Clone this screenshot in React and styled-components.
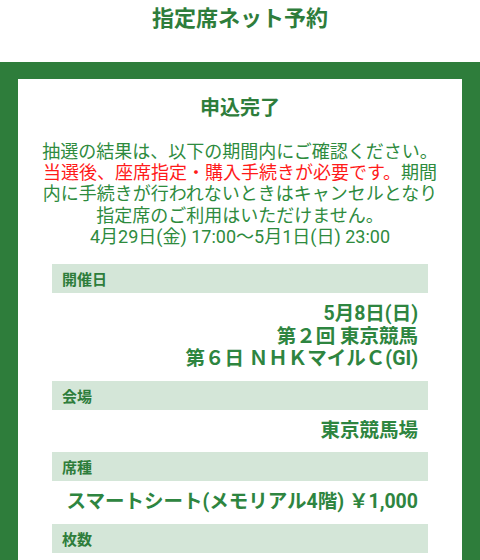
import styled, { createGlobalStyle } from 'styled-components'

const GlobalStyle = createGlobalStyle`
  html, body {
    margin: 0;
    padding: 0;
    background: #ffffff;
    font-family: Roboto, "Noto Sans CJK JP", sans-serif;
  }
`

const rows = [
  { label: '開催日', lines: ['5月8日(日)', '第２回 東京競馬', '第６日 ＮＨＫマイルＣ(GI)'] },
  { label: '会場', lines: ['東京競馬場'] },
  { label: '席種', lines: ['スマートシート(メモリアル4階) ￥1,000'] },
  { label: '枚数', lines: ['1枚'] },
]

const App = () => {
  return (
    <>
      <GlobalStyle />
      <Header>
        <PageTitle>指定席ネット予約</PageTitle>
      </Header>
      <Frame>
        <Card>
          <CardTitle>申込完了</CardTitle>
          <Notice>
            抽選の結果は、以下の期間内にご確認ください。
            <br />
            <Alert>当選後、座席指定・購入手続きが必要です。</Alert>期間
            <br />
            内に手続きが行われないときはキャンセルとなり
            <br />
            指定席のご利用はいただけません。
            <br />
            4月29日(金) 17:00〜5月1日(日) 23:00
          </Notice>
          <Details>
            {rows.map((row) => (
              <div key={row.label}>
                <Label>{row.label}</Label>
                <Value>
                  {row.lines.map((line) => (
                    <div key={line}>{line}</div>
                  ))}
                </Value>
              </div>
            ))}
          </Details>
        </Card>
      </Frame>
    </>
  )
}

export default App

const Header = styled.header`
  height: 62px;
  box-sizing: border-box;
  padding-top: 5px;
  text-align: center;
`

const PageTitle = styled.h1`
  margin: 0;
  font-size: 22px;
  line-height: 28px;
  font-weight: 700;
  color: #2e7d3b;
`

const Frame = styled.main`
  background: #2e7d3b;
  padding: 17px 18px 40px;
`

const Card = styled.section`
  background: #ffffff;
  padding: 15px 34px 30px;
`

const CardTitle = styled.h2`
  margin: 0 0 19px;
  text-align: center;
  font-size: 20px;
  line-height: 28px;
  font-weight: 700;
  color: #2e7d3b;
`

const Notice = styled.p`
  margin: 0 -10px 17px;
  text-align: center;
  font-size: 18px;
  line-height: 21.2px;
  color: #2e8b3e;
  white-space: nowrap;
`

const Alert = styled.span`
  color: #ff1a1a;
`

const Details = styled.div`
  display: flex;
  flex-direction: column;
`

const Label = styled.div`
  background: #d4e6d8;
  height: 29px;
  padding: 0 10px;
  display: flex;
  align-items: center;
  font-size: 15px;
  font-weight: 700;
  color: #2e7d3b;
`

const Value = styled.div`
  padding: 10px 10px;
  text-align: right;
  font-size: 19.5px;
  line-height: 22.5px;
  font-weight: 700;
  color: #2e8540;
  white-space: nowrap;
`
